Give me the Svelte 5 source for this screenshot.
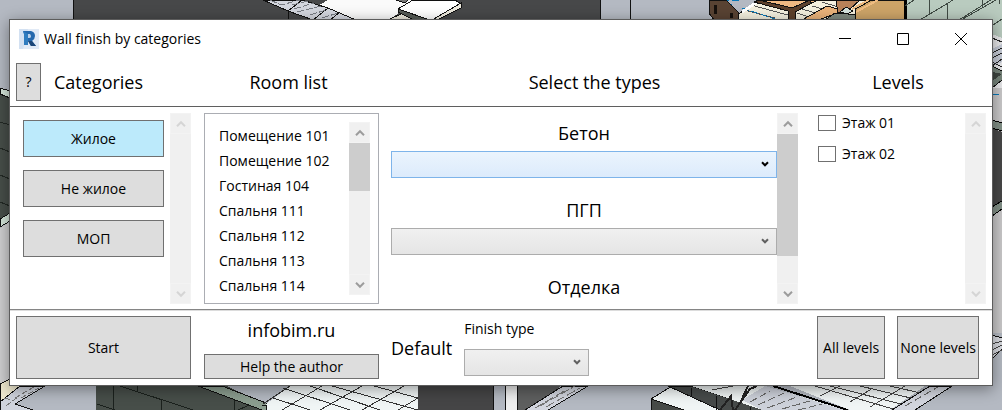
<script>
  const rooms = ['Помещение 101', 'Помещение 102', 'Гостиная 104', 'Спальня 111', 'Спальня 112', 'Спальня 113', 'Спальня 114'];
  const categories = ['Жилое', 'Не жилое', 'МОП'];
  const materials = [
    { id: 'concrete', name: 'Бетон', combo: true },
    { id: 'blocks', name: 'ПГП', combo: true },
    { id: 'finish', name: 'Отделка', combo: false }
  ];
  let selected = $state('Жилое');
  let levels = $state([
    { name: 'Этаж 01', on: false },
    { name: 'Этаж 02', on: false }
  ]);
  const setAll = (on) => levels.forEach((l) => (l.on = on));
</script>

{#snippet chevron()}
  <svg class="chevron" viewBox="0 0 8 6" width="8" height="6" aria-hidden="true"><path d="M1 1.3 4 4.3 7 1.3" /></svg>
{/snippet}

{#snippet scrollbar(thumb, off)}
  <div class="scrollbar" class:off>
    <button class="arrow" tabindex="-1" aria-label="Scroll up">
      <svg viewBox="0 0 10 8" width="10" height="8"><path d="M1 6.2 5 2.2 9 6.2" /></svg>
    </button>
    <div class="track">{#if thumb}<div class="thumb" style:height="{thumb}%"></div>{/if}</div>
    <button class="arrow" tabindex="-1" aria-label="Scroll down">
      <svg viewBox="0 0 10 8" width="10" height="8"><path d="M1 1.8 5 5.8 9 1.8" /></svg>
    </button>
  </div>
{/snippet}

<div class="desktop">
  <svg class="scene" viewBox="0 0 1002 410" preserveAspectRatio="none" aria-hidden="true" shape-rendering="crispEdges">
    <rect width="1002" height="410" fill="#b4b9c2" />
    <!-- upper strip -->
    <rect x="73" width="527" height="60" fill="#474849" />
    <path d="M73.500 0V60M600.500 0V60M630.500 0V60" stroke="#111" />
    <path d="M328 0H406L413 0 398 9V14L388 20H340L313 9Z" fill="#fafafa" />
    <path d="M263 0H302L328 8 356 20H313L288 11Z" fill="#d3d6de" stroke="#111" />
    <path d="M302 0 288 11V20M328 8 313 20M340 12 330 20" stroke="#111" fill="none" />
    <path d="M270 0 281 5 300 0M292 5 308 1M294 9 314 3M297 12 321 6M310 15 326 10M322 18 338 13" stroke="#777b82" fill="none" stroke-dasharray="7 2" />
    <path d="M388 20 403 13 415 17V20Z" fill="#e8e5d8" stroke="#111" />
    <path d="M398 9 432 20H414L398 12Z" fill="#565b56" stroke="#111" />
    <path d="M398 9 413 0H455L461 4 437 20H430Z" fill="#fff" stroke="#111" />
    <path d="M437 20 461 8V3L432 20Z" fill="#edeade" stroke="#111" />
    <path d="M396 0 405 3 408 0" stroke="#111" fill="#777" />
    <path d="M738 14 763 0H905V20H738Z" fill="#f4f0df" stroke="#111" />
    <path d="M744 10 775 18M751 5 795 17M763 4 790 10M770 1 788 7M797 13 812 18M802 9 825 16M812 6 830 11M822 2 838 7" stroke="#555" />
    <path d="M742 8 778 20M712 0 732 5M722 0H742" stroke="#0878b8" stroke-dasharray="7 3" />
    <path d="M709 0H726L738 12V20H714L709 13Z" fill="#594333" stroke="#111" />
    <path d="M715 5V14M731 13V18" stroke="#17110d" stroke-width="3" />
    <path d="M742 12 760 0" stroke="#fff" stroke-width="3" />
    <path d="M759 0 792 12 818 0Z" fill="#f0b982" stroke="#111" />
    <path d="M759 0 792 8 810 0V4L795 12V20H788V11L754 2Z" fill="#5d402b" stroke="#111" />
    <path d="M802 20 827 6 838 9V13L818 20Z" fill="#eab27a" stroke="#111" />
    <path d="M836 0H860L850 9 838 13Z" fill="#b88259" stroke="#111" />
    <path d="M825 20 835 13 860 15V20Z" fill="#7f897f" stroke="#111" />
    <path d="M840 12 846 7 853 11 847 14Z" fill="#d7e5df" stroke="#111" />
    <path d="M855 20V9L872 0H905V20Z" fill="#cda468" stroke="#111" />
    <path d="M852 9 869 0M856 12 878 0" stroke="#eebb81" stroke-width="2" />
    <rect x="905" width="97" height="38" fill="#b9cbbf" />
    <path d="M905 20V0" stroke="#000" stroke-width="3" />
    <path d="M920 20 953 0M905 6 914 0M959 20 1002 -7M961 20 996 0M993 25 1002 19M929.500 0V14M947.500 3V20M982.500 0V8M999.500 0V4" stroke="#3f4a43" fill="none" />
    <!-- right strip -->
    <path d="M992 34 1002 38V90H992Z" fill="#e8e8ea" />
    <path d="M992 49 1002 44V62L992 66Z" fill="#c5cad5" />
    <path d="M992 38 1002 42M992 53 1002 48M992 58 1002 53M992 66 1002 59M992 62 1002 67" stroke="#222" />
    <path d="M992 66 1002 71V80L992 88Z" fill="#77857b" stroke="#111" />
    <path d="M992 72 1002 74 992 81Z" fill="#3e4540" />
    <rect x="992" y="88" width="10" height="245" fill="#cac9ca" />
    <path d="M992 94H999" stroke="#0878b8" />
    <path d="M992 128 1002 132V202L992 206Z" fill="#484848" />
    <path d="M992 120 1002 123V131L992 128ZM992 207 1002 201V209L992 216Z" fill="#829087" stroke="#000" />
    <path d="M992 335 1002 338V349L992 359Z" fill="#d8dae0" stroke="#111" />
    <path d="M992 344 1002 341M992 350 1002 345M992 355 1002 350" stroke="#444" />
    <!-- left strip -->
    <path d="M0 94 10 98V216L0 222Z" fill="#474e49" />
    <path d="M0 88 10 91V98L0 94ZM0 219 10 213V221L0 227Z" fill="#d5e6da" stroke="#111" />
    <path d="M0 122 10 125M0 148 10 152M0 175 10 179M0 202 10 206" stroke="#222824" />
    <path d="M0 228 10 222V386H0Z" fill="#cfcfd0" />
    <!-- lower strip -->
    <path d="M0 384 10 379 28 384 0 404Z" fill="#eee8cf" stroke="#111" />
    <path d="M0 402 20 386H45L15 404 33 410H0Z" fill="#cfd3dc" stroke="#111" />
    <path d="M15 398 34 387M6 406 19 396M21 398 39 388M4 398 12 400" stroke="#777" stroke-dasharray="6 2" />
    <path d="M96 380H215L266 405V410H96Z" fill="#474e49" />
    <path d="M113.500 386V410M137.500 386V391M161.500 399V410M234.500 398V410M120 386 193 410M97 404 115 410M238 410 256 402" stroke="#1b211d" fill="none" />
    <path d="M198 386 262 410H266V403L222 386Z" fill="#8b9d8f" stroke="#111" />
    <path d="M290 386H418V410H266V404Z" fill="#f0f5f5" />
    <path d="M290 386 263 404M283 388 350 410M310 386 380 410M332 386 418 410M374 386 418 398M273 398 310 410M322 386 282 410M362 386 320 410M404 386 362 410M418 398 398 410" stroke="#333" fill="none" />
    <path d="M262 405H266.500V410" stroke="#111" fill="none" />
    <rect x="418" y="380" width="75" height="30" fill="#454546" />
    <rect x="506" y="380" width="11" height="30" fill="#eee" />
    <path d="M505.500 380V410M493.500 380V410M517.500 380V410" stroke="#111" />
    <path d="M518 380H570L526 410H518Z" fill="#5e5f5f" />
    <path d="M525 410 563 386H588L548 410Z" fill="#d2d5de" stroke="#111" />
    <path d="M540 406 575 386M546 407 580 388M535 408 566 390" stroke="#777" stroke-dasharray="9 3" />
    <path d="M651 399 672 386H700L745 410H651Z" fill="#f0f5f5" stroke="#111" />
    <path d="M651 399 684 410H651Z" fill="#474b48" stroke="#111" />
    <path d="M668 386H692L764 410H720Z" fill="#474b4a" stroke="#111" />
    <path d="M691.500 388V396M716.500 396V410M750.500 407V410" stroke="#111" />
    <path d="M692 386H764L848 410H762Z" fill="#eef3f3" />
    <path d="M742 400 765 386 845 410H762Z" fill="#cdd1da" />
    <path d="M750 402 770 391M758 405 784 393M767 408 797 397M782 409 810 401M798 410 822 404" stroke="#666" stroke-dasharray="8 3" />
    <path d="M773 386 848 410" stroke="#000" stroke-width="2" />
    <path d="M790 386H925L890 410H850Z" fill="#f0f5f5" />
    <path d="M815 386 893 409M830 386 905 405M860 386 915 399M890 386 925 394M850 402 873 388M870 407 905 386M820 396 840 386M712 390 733 386" stroke="#444" fill="none" />
    <path d="M892 410 930 386H952L915 410Z" fill="#d2d5de" stroke="#111" />
    <path d="M905 406 938 387" stroke="#666" stroke-dasharray="8 3" />
    <path d="M720 410 731 396 733 410M735 410 750 389 757 386M741 401 748 386" stroke="#222" stroke-width="2" fill="none" />
  </svg>

  <main class="window">
    <header class="titlebar">
      <svg class="logo" viewBox="0 0 20 20" width="20" height="20" aria-hidden="true">
        <rect width="20" height="20" fill="#e1eaf6" />
        <path d="M0 0H9L4 20H0Z" fill="#d3e1f2" />
        <path d="M4 2H12Q16 3 16 7 16 10 13 12L17 17H12L9 12V16H5V5Z" fill="#2569ae" />
        <path d="M4 2 9 5V16H5V5Z" fill="#2f7cbf" />
        <path d="M9 5H11Q12 6 12 7.500 12 9 10 9H9Z" fill="#b9d0ea" />
        <path d="M9 12 13 12 17 17H12Z" fill="#1c4779" />
      </svg>
      <h1>Wall finish by categories</h1>
      <div class="controls">
        <button aria-label="Minimize"><svg viewBox="0 0 14 14" width="14" height="14"><path d="M1 6.500H13" /></svg></button>
        <button aria-label="Maximize"><svg viewBox="0 0 14 14" width="14" height="14"><path d="M1.500 1.500H12.500V12.500H1.500Z" /></svg></button>
        <button aria-label="Close"><svg viewBox="0 0 14 14" width="14" height="14"><path d="M1 1 13 13M13 1 1 13" /></svg></button>
      </div>
    </header>

    <div class="row heads">
      <div class="first"><button class="btn help">?</button><h2>Categories</h2></div>
      <h2 class="rooms">Room list</h2>
      <h2>Select the types</h2>
      <h2>Levels</h2>
    </div>

    <div class="row body">
      <section class="pane">
        <div class="categories">
          {#each categories as c}
            <button class="btn" class:active={selected === c} onclick={() => (selected = c)}>{c}</button>
          {/each}
        </div>
        {@render scrollbar(0, true)}
      </section>

      <section class="pane">
        <div class="listbox">
          <ul>{#each rooms as r}<li>{r}</li>{/each}</ul>
          {@render scrollbar(37, false)}
        </div>
      </section>

      <section class="pane">
        <div class="types">
          {#each materials as m, i}
            {#if m.combo}
              <div class="field">
                <label for={m.id}>{m.name}</label>
                <div class="combo" class:hot={i === 0}>
                  <select id={m.id}><option></option></select>{@render chevron()}
                </div>
              </div>
            {:else}
              <div class="field"><h3>{m.name}</h3></div>
            {/if}
          {/each}
        </div>
        {@render scrollbar(82, false)}
      </section>

      <section class="pane">
        <div class="levels">
          {#each levels as l}
            <label><input type="checkbox" bind:checked={l.on} />{l.name}</label>
          {/each}
        </div>
        {@render scrollbar(0, true)}
      </section>
    </div>

    <footer class="row foot">
      <div class="pane"><button class="btn grow">Start</button></div>
      <div class="pane author">
        <span class="site">infobim.ru</span>
        <button class="btn">Help the author</button>
      </div>
      <div class="pane defaults">
        <span class="large">Default</span>
        <div class="finish">
          <label for="finish-type">Finish type</label>
          <div class="combo"><select id="finish-type"><option></option></select>{@render chevron()}</div>
        </div>
      </div>
      <div class="pane all">
        <button class="btn" onclick={() => setAll(true)}>All levels</button>
        <button class="btn" onclick={() => setAll(false)}>None levels</button>
      </div>
    </footer>
  </main>
</div>

<style>
  .desktop {
    position: relative;
    box-sizing: border-box;
    min-height: 100vh;
    padding: 19px 9px 24px;
    overflow: hidden;
    font: 14px/20px "Open Sans", "Noto Sans", sans-serif;
    color: #000;
  }
  .desktop :global(*) { box-sizing: border-box; }
  .scene { position: absolute; inset: 0; width: 100%; height: 100%; }
  .window {
    position: relative;
    background: #fff;
    border: 1px solid #5c5c5c;
    box-shadow: 0 3px 14px rgba(0, 0, 0, 0.4);
  }
  h1, h2, h3, ul { margin: 0; padding: 0; font: inherit; }
  button, select { font: inherit; color: inherit; padding: 0; margin: 0; }
  h2, h3, .field label, .site, .large { font-size: 18px; line-height: 24px; }

  .titlebar { display: flex; align-items: center; height: 37px; padding: 0 2px 0 9px; }
  .titlebar h1 { flex: 1; margin-left: 5px; }
  .controls { display: flex; align-self: stretch; }
  .controls button { display: grid; place-items: center; width: 58px; border: 0; background: none; }
  .controls svg { display: block; fill: none; stroke: #000; }

  .row { display: grid; grid-template-columns: 188fr 187fr 419fr 188fr; }
  .heads { height: 50px; padding-top: 1px; align-items: center; text-align: center; border-bottom: 1px solid #5f5f5f; }
  .heads .first { display: flex; align-items: center; gap: 13px; padding-left: 6px; }
  .heads .rooms { padding-right: 6px; }
  .btn { border: 1px solid #707070; background: #ddd; white-space: nowrap; }
  .btn.active { background: #bceafb; }
  .help { width: 25px; height: 38px; }

  .pane { display: flex; min-width: 0; padding: 6px; }
  .body { border-bottom: 1px solid #858585; }
  .body .pane { height: 202px; padding-bottom: 5px; }
  .row .pane:first-child { padding-right: 7px; }
  .categories { flex: 1; display: flex; flex-direction: column; gap: 13px; padding: 7px 6px 0 7px; }
  .categories .btn { height: 37px; }

  .listbox { flex: 1; display: flex; border: 1px solid #abadb3; padding: 8px; }
  .listbox ul { flex: 1; list-style: none; padding: 1px 0 0 6px; overflow: hidden; }
  .listbox li { line-height: 25px; white-space: nowrap; }

  .scrollbar { display: flex; flex-direction: column; width: 21px; background: #f0f0f0; }
  .arrow { display: grid; place-items: center; height: 21px; border: 1px solid #f3f3f3; background: #f0f0f0; }
  .arrow svg { fill: none; stroke: #9c9c9c; stroke-width: 2; }
  .off .arrow svg { stroke: #d5d5d5; }
  .track { flex: 1; }
  .thumb { background: #cdcdcd; }

  .types { flex: 1; display: flex; flex-direction: column; gap: 20px; padding-top: 8px; }
  .field { text-align: center; }
  .field label { display: block; margin-bottom: 6px; }
  .combo { display: grid; align-items: center; border: 1px solid #acacac; background: linear-gradient(#f0f0f0, #e5e5e5); }
  .combo.hot { border-color: #7eb4ea; background: linear-gradient(#ebf4fd, #dcebfc); }
  .combo select { grid-area: 1 / 1; appearance: none; width: 100%; height: 25px; border: 0; outline: 0; background: none; }
  .chevron { grid-area: 1 / 1; justify-self: end; margin-right: 7px; margin-bottom: 2px; fill: none; stroke: #606060; stroke-width: 2; pointer-events: none; }
  .hot .chevron { stroke: #000; }

  .levels { flex: 1; display: flex; flex-direction: column; gap: 11px; padding-left: 8px; }
  .levels label { display: flex; align-items: center; gap: 6px; }
  .levels input { appearance: none; width: 18px; height: 16px; margin: 0; border: 1px solid #707070; background: #fff; }
  .levels input:checked { background: #0a64ad; }

  .foot { border-top: 1px solid #dcdcdc; }
  .foot .pane { height: 74px; padding-top: 5px; padding-bottom: 6px; }
  .grow { flex: 1; }
  .author { flex-direction: column; justify-content: space-between; text-align: center; }
  .author .btn { height: 25px; }
  .author .site { padding-top: 2px; }
  .defaults { align-items: center; gap: 12px; }
  .finish { width: 125px; }
  .finish label { display: block; margin-bottom: 10px; line-height: 20px; }
  .foot .all { gap: 12px; padding-left: 13px; padding-right: 13px; }
  .all .btn { flex: 68; }
  .all .btn + .btn { flex: 82; }
</style>
